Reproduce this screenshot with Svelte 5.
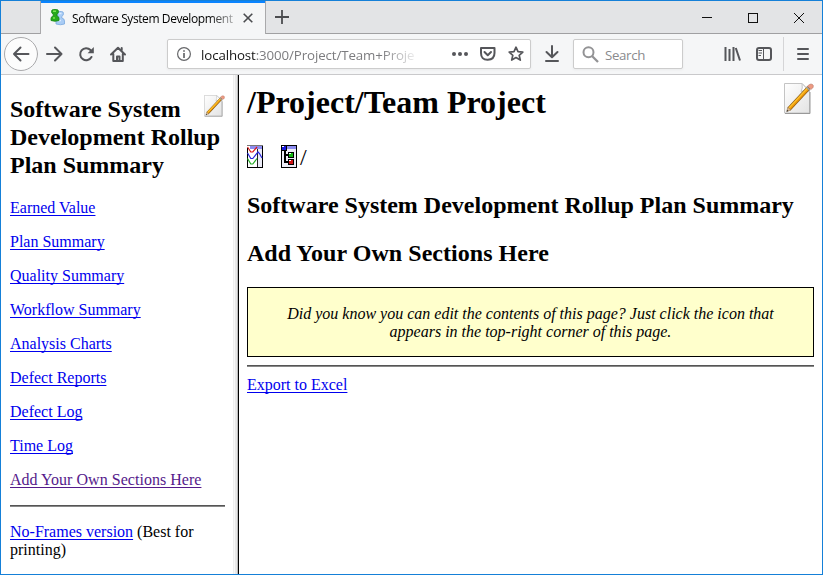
<script>
  const links = ['Earned Value', 'Plan Summary', 'Quality Summary', 'Workflow Summary', 'Analysis Charts', 'Defect Reports', 'Defect Log', 'Time Log'];
</script>

{#snippet pencil(size)}
  <svg width={size} height={size * 32 / 30} viewBox="0 0 30 32">
    <defs>
      <linearGradient id="sheet" x1="0" y1="0" x2="1" y2="1"><stop offset="0" stop-color="#fff" /><stop offset="1" stop-color="#e3e3e3" /></linearGradient>
    </defs>
    <path d="M.5 .5H18l7.500 7.500v22H.5z" fill="url(#sheet)" stroke="#c4c4c4" />
    <path d="M1 30.500h25V9" fill="none" stroke="#999" />
    <path d="M18 .5q1 5-1 8 4-2 8.500 0z" fill="#fff" stroke="#c4c4c4" />
    <path d="M5 26 25 4.500" stroke="#8a5a16" stroke-width="4.200" />
    <path d="m5 25.500 19-20.500" stroke="#ffc02a" stroke-width="2.300" />
    <path d="m5.800 26.200 19-20.500" stroke="#ed9808" stroke-width="1.400" />
    <path d="m23.500 3 3.500 3.500 2-2q1-2-.5-3t-3 0z" fill="#ed9a82" stroke="#b7796a" stroke-width=".6" />
    <path d="m22.500 4 3.500 3.500" stroke="#9aa0a8" stroke-width="1.500" />
    <path d="m2.800 28.500 1-4.200 3 2.700z" fill="#e5bd8b" stroke="#8e7556" stroke-width=".6" />
    <path d="m2.500 28.800.7-2 1.300 1.200z" fill="#333" />
  </svg>
{/snippet}

<div class="window">
  <div class="tabs">
    <div class="tab">
      <svg width="16" height="17" viewBox="0 0 16 17">
        <path d="M6.500 4.500q0-2 2-2h3q2 0 2 2T11.800 7.500v1.500q2.700.5 2.700 3v3q-4 1.500-8.500 0v-3q0-2 2.300-2.700V7.500q-1.800-1-1.800-3z" fill="#a9ccf5" stroke="#7aa9e0" stroke-width=".8" />
        <path d="M9 4.500h2.500M8 11.500h3" stroke="#dcecff" stroke-width="1.300" />
        <path d="M1.500 2.500q0-2 2-2h3q2 0 2 2T7 5v2q2 .5 2 2.500v2q-4 1.500-8 0v-2Q1 7.500 3.200 7V5Q1.500 4.500 1.500 2.500z" fill="#27a91b" stroke="#148512" stroke-width=".8" />
        <path d="M3 2.300h3M3 9h2" stroke="#7be452" stroke-width="1.500" />
      </svg>
      <span class="tabtitle">Software System Development</span>
      <svg class="tabclose" width="10" height="10" viewBox="0 0 10 10"><path d="m.7.7 8.600 8.600m0-8.600L.7 9.300" stroke="#4b4c4f" stroke-width="1.600" /></svg>
    </div>
    <svg class="plus" width="14" height="14" viewBox="0 0 14 14"><path d="M7 0v14M0 7h14" stroke="#4b4c4f" stroke-width="1.800" /></svg>
    <svg class="controls" width="104" height="12" viewBox="0 0 104 12" fill="none" stroke="#111" shape-rendering="crispEdges">
      <path d="M0 5.500h10M46.500 1.500h9v9h-9z" /><path d="m92 1 10 10m0-10L92 11" shape-rendering="auto" />
    </svg>
  </div>

  <div class="toolbar">
    <svg class="nav" width="130" height="40" viewBox="0 0 130 40" fill="none" stroke="#55565a" stroke-width="2" stroke-linecap="round" stroke-linejoin="round">
      <circle cx="20" cy="20" r="16.500" fill="#fcfcfc" stroke="#aaaaac" stroke-width="1" />
      <path d="M27.500 20H13m6.500-6.500L13 20l6.500 6.500" />
      <path d="M46 20h14.500m-6.500-6.500L60.500 20 54 26.500" />
      <path d="M90.500 23a6 6 0 1 1-1-7" /><path d="M92.800 13v6.200h-6.200z" fill="#55565a" stroke="none" />
      <path d="m110 20.500 7-6.800 7 6.800M112.300 20v7h9.500v-7" /><path d="M116 27v-4.500h2.500V27M120.700 16v-2" />
    </svg>
    <div class="url">
      <svg width="14" height="14" viewBox="0 0 14 14" fill="none" stroke="#66676a"><circle cx="7" cy="7" r="6.400" stroke-width="1.200" /><path d="M7 6v5M7 3.200v1.600" stroke-width="1.700" /></svg>
      <span class="address"><b>localhost</b>:3000/Project/Team+Proje</span>
      <svg class="actions" width="74" height="18" viewBox="0 0 74 18" fill="none" stroke="#55565a" stroke-width="2" stroke-linejoin="round" stroke-linecap="round">
        <g fill="#55565a" stroke="none"><circle cx="3" cy="9" r="2" /><circle cx="9" cy="9" r="2" /><circle cx="15" cy="9" r="2" /></g>
        <path d="M30 3h13.500v5q0 6.500-6.750 6.700T30 8zM33.500 7l3.250 3.200L40 7" />
        <path d="m65 2.200 2 4.400 4.800.5-3.600 3.200 1.100 4.800-4.300-2.500-4.300 2.500 1.100-4.800-3.600-3.200 4.800-.5z" stroke-width="1.700" />
      </svg>
    </div>
    <svg class="download" width="14" height="18" viewBox="0 0 14 18" fill="none" stroke="#55565a" stroke-width="2"><path d="M7 1v11M1.500 7 7 12.300 12.500 7M1 16h12" stroke-linecap="round" stroke-linejoin="round" /></svg>
    <div class="search">
      <svg width="18" height="18" viewBox="0 0 18 18" fill="none" stroke="#939395" stroke-width="2"><circle cx="6.500" cy="6.200" r="5" /><path d="m10 10 6 6" stroke-width="2.300" /></svg>
      <span>Search</span>
    </div>
    <svg class="tools" width="88" height="34" viewBox="0 0 88 34" fill="none" stroke="#55565a" stroke-width="2">
      <path d="M2.500 10v14M6.500 12v12M10.500 10v14M12.800 11l4.200 12.500" />
      <rect x="34" y="11" width="14" height="12" rx="2" /><path d="M40.500 11v12M35.500 13.500H39M35.500 16H39M35.500 18.500H38" stroke-width="1" />
      <path d="M60.500 0v34" stroke="#d5d5d7" stroke-width="1" />
      <path d="M75 12h10M75 17h10M75 22h10" stroke-linecap="round" />
    </svg>
  </div>

  <div class="frames">
    <nav>
      <div class="edit">{@render pencil(21)}</div>
      <h2>Software System Development Rollup Plan Summary</h2>
      {#each links as label}<p><a href="#top">{label}</a></p>{/each}
      <p class="last"><a class="visited" href="#top">Add Your Own Sections Here</a></p>
      <hr />
      <p class="print"><a href="#top">No-Frames version</a> (Best for printing)</p>
    </nav>
    <div class="split"></div>
    <main>
      <div class="edit">{@render pencil(30)}</div>
      <h1>/Project/Team Project</h1>
      <div class="icons">
        <svg width="16" height="23" viewBox="0 0 16 23" fill="none" shape-rendering="crispEdges">
          <path d="M0 0h16v23H0z" fill="#fff" /><path d="M3 1h12v3H3z" fill="#8c8cf0" /><path d="M11 4h4v18h-4z" fill="#ececf8" />
          <path d="M.5 3v19.500h15V.5" stroke="#000" /><path d="M0 .5h16" stroke="#777" /><path d="M10.500 4v18" stroke="#222" />
          <g shape-rendering="auto" stroke-width="1.200"><path d="m.5 2 3.300 5h2L10 2" stroke="#dc1717" /><path d="m.5 8 3.300 5.500h2L11 7l1.500 1.500L15 13" stroke="#2525dd" /><path d="m.5 13.500 3.300 5.500h2l4.200-5.500" stroke="#23aa23" /></g>
        </svg>
        <svg width="16" height="23" viewBox="0 0 16 23" fill="none" shape-rendering="crispEdges">
          <path d="M0 0h16v23H0z" fill="#eeeef8" /><path d="M.5 6v16.500h15V.5H6" stroke="#000" /><path d="M6 1h9v3H6z" fill="#8c8cf0" />
          <path d="M3 6h2v3h3v2H5v5h3v2H3z" fill="#000" />
          <path d="M.5 .5h5v5h-5z" fill="#1818e0" stroke="#000" /><path d="M7.500 7.500h5v5h-5z" fill="#14b814" stroke="#000" /><path d="M7.500 14.500h5v5h-5z" fill="#d01515" stroke="#000" />
          <path d="M1 1.500h2M8 8.500h2M8 15.500h2" stroke="#fff" />
        </svg>
        <span>/</span>
      </div>
      <h2>Software System Development Rollup Plan Summary</h2>
      <h2 class="own">Add Your Own Sections Here</h2>
      <div class="tip">Did you know you can edit the contents of this page? Just click the icon that<br />appears in the top-right corner of this page.</div>
      <hr />
      <a class="export" href="#top">Export to Excel</a>
    </main>
  </div>
</div>

<style>
  :global(body) { margin: 0; }
  svg { display: block; flex: none; }
  .window { box-sizing: border-box; width: 823px; height: 575px; border: 1px solid #1580d8; background: #fff; display: flex; flex-direction: column; overflow: hidden; font: 16px/18px "Liberation Serif", serif; color: #000; }
  .tabs { flex: none; box-sizing: border-box; height: 33px; background: #e3e4e6; border-bottom: 1px solid #a0a0a2; display: flex; padding-left: 39px; font: 12px/16px "Open Sans", sans-serif; }
  .tab { box-sizing: border-box; width: 226px; height: 33px; background: #f5f6f7; border: solid #a9a9ab; border-width: 0 1px; box-shadow: inset 0 2px #0a84ff; display: flex; padding: 8px 0 0 9px; }
  .tabtitle { width: 166px; margin: 2px 0 0 6px; white-space: nowrap; letter-spacing: -.41px; mask-image: linear-gradient(90deg, #000 136px, transparent 172px); }
  .tabclose { margin: 4px 0 0 5px; }
  .plus { margin: 9px 0 0 9px; }
  .controls { margin: 11px 0 0 413px; }
  .toolbar { flex: none; box-sizing: border-box; height: 41px; background: #f5f6f7; border-bottom: 1px solid #c9c9cb; display: flex; font: 13.3px/18px "Open Sans", sans-serif; }
  .url, .search { box-sizing: border-box; height: 30px; margin-top: 5px; background: #fff; border: 1px solid #ccc; border-radius: 2px; box-shadow: 0 1px 3px #0000000d; display: flex; }
  .url { width: 364px; margin-left: 36px; padding: 7px 0 0 9px; }
  .address { width: 219px; margin: -1px 0 0 10px; white-space: nowrap; color: #7c7c7f; letter-spacing: -.11px; mask-image: linear-gradient(90deg, #000 180px, transparent 219px); }
  .address b { font-weight: 400; color: #151515; }
  .actions { margin: -2px 0 0 31px; }
  .download { margin: 11px 0 0 14px; }
  .search { width: 110px; margin-left: 14px; padding: 6px 0 0 8px; color: #8a8a8d; }
  .search span { margin: 0 0 0 5px; letter-spacing: -.35px; }
  .tools { margin: 3px 0 0 40px; }
  .frames { flex: 1; min-height: 0; display: flex; }
  nav { position: relative; box-sizing: border-box; width: 232px; padding: 20px 8px 0 9px; }
  .split { box-sizing: border-box; width: 6px; border-left: 1px solid #eee; border-right: 1px solid #000; background: linear-gradient(90deg, #f8f8f8 1px, #e8e8e8 1px 3px, #bbb 3px); }
  h1, h2, p { margin: 0; }
  h1 { font-size: 32px; line-height: 37px; }
  h2 { font-size: 24px; line-height: 28px; margin-bottom: 20px; }
  nav h2 { width: 214px; }
  h2.own { letter-spacing: .04px; }
  p { margin-bottom: 16px; }
  p.last { letter-spacing: .03px; }
  a { color: #0000ee; text-underline-offset: 2px; text-decoration-thickness: 1px; text-decoration-skip-ink: none; }
  a.visited { color: #551a8b; }
  hr { box-sizing: border-box; height: 2px; margin: 0; border: solid #555; border-width: 1px 0; border-bottom-color: #888; }
  .print { margin-top: 16px; }
  nav .edit { position: absolute; left: 203px; top: 20px; }
  main { position: relative; flex: 1; padding: 9px 8px 0; }
  main .edit { position: absolute; left: 545px; top: 8px; }
  .icons { display: flex; height: 46px; padding-top: 24px; }
  .icons svg + svg { margin-left: 18px; }
  .icons span { font-size: 24px; line-height: 24px; margin-left: 3px; }
  .tip { box-sizing: border-box; height: 70px; border: 1px solid #000; background: #ffffcc; padding-top: 17px; text-align: center; font-style: italic; margin-bottom: 8px; }
  .export { display: block; width: max-content; margin-top: 9px; }
</style>
